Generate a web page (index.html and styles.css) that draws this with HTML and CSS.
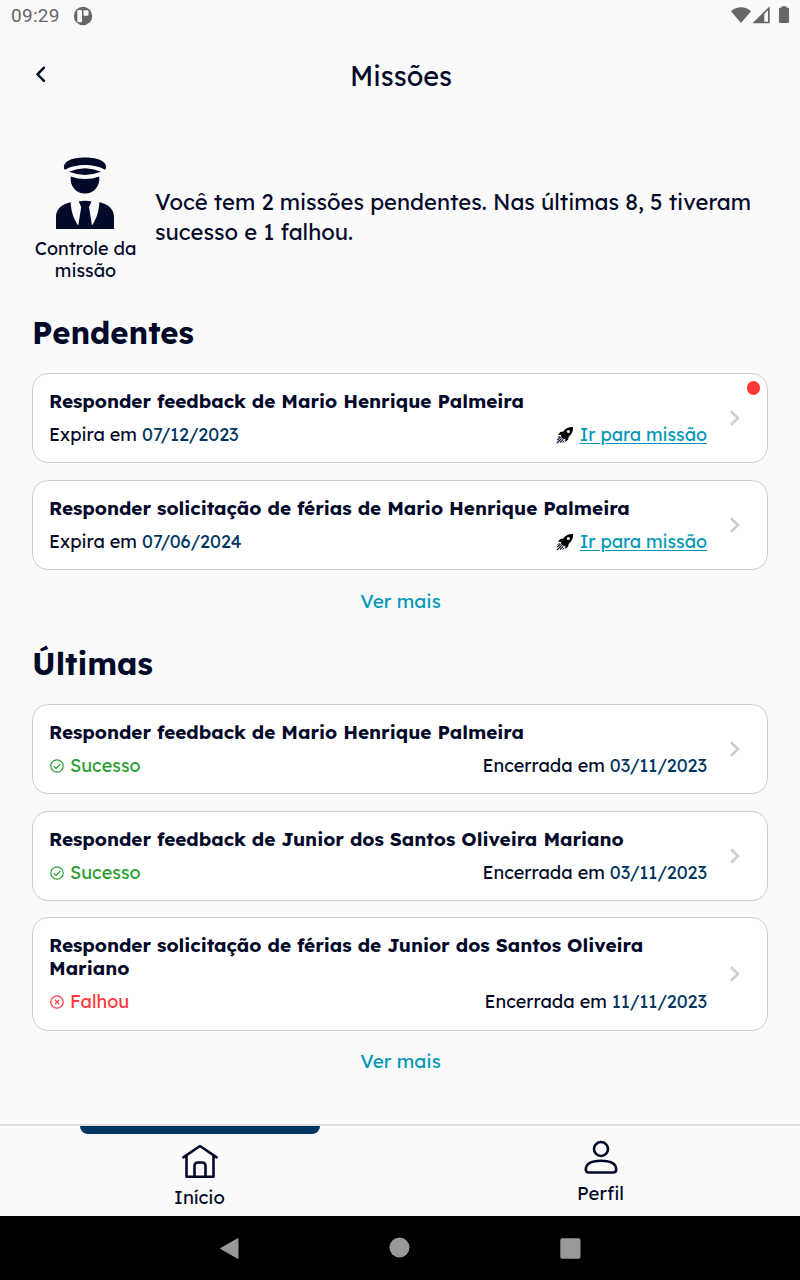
FILE: index.html
```html
<!DOCTYPE html>
<html lang="pt-BR">
<head>
  <meta charset="UTF-8" />
  <meta name="viewport" content="width=device-width, initial-scale=1.0"/>
  <title>Missões</title>
  <link rel="stylesheet" href="styles.css">
</head>
<body>

  <svg width="0" height="0" class="symbols">
    <symbol id="rocket" viewBox="0 0 18 18">
      <path d="M17 1C12.500 .8 9.200 2.600 7.300 5.400L4.300 6 2 8.800 5.200 8.900C4.900 10.200 5.200 11.300 6 12S8 13.100 9.300 12.800L9.300 16 12 13.800 12.800 10.700C15.800 8.400 17.400 5 17 1Z"/>
      <circle cx="12.400" cy="5.600" r="1.500" fill="#fff"/>
      <path d="M4.600 10.900L1.300 14.200M5.600 12.400L1 17M7.200 13.400L4 16.600" fill="none" stroke="currentColor" stroke-width="1.200"/>
      <path d="M3.600 10L1.800 11.800M8.300 14.700L6.600 16.900" fill="none" stroke="currentColor"/>
    </symbol>
    <symbol id="chevron" viewBox="0 0 12 18">
      <path d="M2 2.200L9 9L2 15.800" fill="none" stroke="currentColor" stroke-width="2.600"/>
    </symbol>
    <symbol id="success" viewBox="0 0 14 14">
      <g fill="none" stroke="currentColor" stroke-width="1.200">
        <circle cx="7" cy="7" r="6.200"/>
        <path d="M3.800 7.200L6 9.400L10.400 5"/>
      </g>
    </symbol>
    <symbol id="fail" viewBox="0 0 14 14">
      <g fill="none" stroke="currentColor" stroke-width="1.200">
        <circle cx="7" cy="7" r="6.200"/>
        <path d="M4.900 4.900L9.100 9.100M9.100 4.900L4.900 9.100"/>
      </g>
    </symbol>
  </svg>

  <div class="status-bar">
    <span class="clock">09:29</span>
    <svg class="app-icon" width="20" height="20" viewBox="0 0 20 20">
      <circle cx="10" cy="10" r="9.200" fill="#666"/>
      <rect x="4.300" y="4" width="4.700" height="12.300" rx="1.200" fill="#fafafa"/>
      <rect x="10.500" y="4.300" width="5" height="5.500" rx="1.200" fill="#fafafa"/>
    </svg>
    <svg class="signals" width="60" height="20" viewBox="0 0 60 20" fill="#666">
      <path d="M1 6.200C6.500 .8 15.500 .8 21 6.200L11 18Z"/>
      <path d="M22.500 18.300L39.700 1.200V18.300Z"/>
      <path d="M34.300 9L38 5.300V16.800H34.300Z" fill="#fafafa"/>
      <path d="M51.500 1.200h5v1.600H59V16.700q0 1.300-1.300 1.300H50.300q-1.300 0-1.300-1.300V2.800h2.500Z"/>
    </svg>
  </div>

  <header>
    <svg class="back" width="18" height="20" viewBox="0 0 18 20">
      <path d="M12 3.700L5.500 10.300L12 16.900" fill="none" stroke="currentColor" stroke-width="2.400" stroke-linecap="round"/>
    </svg>
    <h1>Missões</h1>
  </header>

  <main>
    <div class="summary">
      <div class="control">
        <svg width="58" height="73" viewBox="0 0 58 73" fill="currentColor">
          <path d="M8.500 12.500C5.500 5 15 .5 29 .5S52.500 5 49.500 12.500L48.500 12.500C39 6.500 19 6.500 9.500 12.500Z"/>
          <path d="M13 14.800Q29 7.500 45 14.800Q29 21 13 14.800Z"/>
          <path d="M14.800 19.500Q29 24.500 43.200 19.500C44.500 29 38 36.500 29 36.500S13.500 29 14.800 19.500Z"/>
          <path d="M0 72V60C0 52 6 47 14.700 45.300C15 54 17.500 62 22.300 68.500L25.200 50L22.700 44.500Q29 42.800 35.500 44.500L33 50L36 68.500C40.500 62 43 54 43.300 45.300C52 47 58 52 58 60V72Z"/>
        </svg>
        <span>Controle da<br>missão</span>
      </div>
      <p>Você tem 2 missões pendentes. Nas últimas 8, 5 tiveram<br>sucesso e 1 falhou.</p>
    </div>

    <h2>Pendentes</h2>
    <div class="card">
      <div class="card-body">
        <h3>Responder feedback de Mario Henrique Palmeira</h3>
        <div class="meta">
          <span>Expira em <b>07/12/2023</b></span>
          <span class="go"><svg width="18" height="18"><use href="#rocket"/></svg><a href="#">Ir para missão</a></span>
        </div>
      </div>
      <svg class="chevron" width="12" height="18"><use href="#chevron"/></svg>
      <span class="dot"></span>
    </div>
    <div class="card">
      <div class="card-body">
        <h3>Responder solicitação de férias de Mario Henrique Palmeira</h3>
        <div class="meta">
          <span>Expira em <b>07/06/2024</b></span>
          <span class="go"><svg width="18" height="18"><use href="#rocket"/></svg><a href="#">Ir para missão</a></span>
        </div>
      </div>
      <svg class="chevron" width="12" height="18"><use href="#chevron"/></svg>
    </div>
    <a class="more" href="#">Ver mais</a>

    <h2>Últimas</h2>
    <div class="card">
      <div class="card-body">
        <h3>Responder feedback de Mario Henrique Palmeira</h3>
        <div class="meta">
          <span class="status success"><svg width="14" height="14"><use href="#success"/></svg>Sucesso</span>
          <span>Encerrada em <b>03/11/2023</b></span>
        </div>
      </div>
      <svg class="chevron" width="12" height="18"><use href="#chevron"/></svg>
    </div>
    <div class="card">
      <div class="card-body">
        <h3>Responder feedback de Junior dos Santos Oliveira Mariano</h3>
        <div class="meta">
          <span class="status success"><svg width="14" height="14"><use href="#success"/></svg>Sucesso</span>
          <span>Encerrada em <b>03/11/2023</b></span>
        </div>
      </div>
      <svg class="chevron" width="12" height="18"><use href="#chevron"/></svg>
    </div>
    <div class="card tall">
      <div class="card-body">
        <h3>Responder solicitação de férias de Junior dos Santos Oliveira<br>Mariano</h3>
        <div class="meta">
          <span class="status fail"><svg width="14" height="14"><use href="#fail"/></svg>Falhou</span>
          <span>Encerrada em <b>11/11/2023</b></span>
        </div>
      </div>
      <svg class="chevron" width="12" height="18"><use href="#chevron"/></svg>
    </div>
    <a class="more last" href="#">Ver mais</a>
  </main>

  <nav class="tabs">
    <a class="tab active" href="#">
      <svg width="38" height="36" viewBox="0 0 38 36" fill="none" stroke="currentColor" stroke-width="2.600" stroke-linecap="round" stroke-linejoin="round">
        <path d="M2.300 14.300L19 3L35.700 14.300M5.500 12.500V33.700H32.500V12.500"/>
        <path d="M13.500 33.500V23Q13.500 19.500 17 19.500H21Q24.500 19.500 24.500 23V33.500"/>
      </svg>
      <span>Início</span>
    </a>
    <a class="tab profile" href="#">
      <svg width="38" height="36" viewBox="0 0 38 36" fill="none" stroke="currentColor" stroke-width="2.600">
        <circle cx="19" cy="10" r="7"/>
        <path d="M3.800 30.500C3.800 24.500 10 21.700 19 21.700S34.200 24.500 34.200 30.500Q34.200 33.500 31.200 33.500H6.800Q3.800 33.500 3.800 30.500Z"/>
      </svg>
      <span>Perfil</span>
    </a>
  </nav>

  <div class="system-nav">
    <svg width="22" height="24" viewBox="0 0 22 24"><path d="M1.500 12.500L19 2.500V22.500Z" fill="#999" stroke="#999" stroke-linejoin="round"/></svg>
    <svg width="22" height="24" viewBox="0 0 22 24"><circle cx="10.500" cy="11.500" r="10" fill="#999"/></svg>
    <svg width="22" height="24" viewBox="0 0 22 24"><rect x="1.300" y="2.300" width="20.200" height="20.400" rx="2" fill="#999"/></svg>
  </div>

</body>
</html>
```
FILE: styles.css
```css
* {
  box-sizing: border-box;
}
body {
  margin: 0;
  height: 1280px;
  display: flex;
  flex-direction: column;
  background-color: #fafafa;
  color: #030929;
  font-family: Lexend, Inter, sans-serif;
  font-size: 18px;
  line-height: 22px;
  overflow: hidden;
}
a {
  color: #0097b8;
  text-decoration: none;
}
h1, h2, h3, p {
  margin: 0;
}
.symbols {
  position: absolute;
}
.status-bar {
  height: 32px;
  padding: 0 10px 0 11px;
  display: flex;
  align-items: center;
  color: #666;
  font-family: Roboto, sans-serif;
  font-size: 19px;
  letter-spacing: 0.3px;
}
.app-icon {
  margin-left: 13px;
}
.signals {
  margin: 0 0 2px auto;
}
header {
  height: 89px;
  padding: 0 32px;
  display: grid;
  grid-template-columns: 18px 1fr 16px;
  align-items: center;
}
.back {
  margin-bottom: 5px;
}
h1 {
  margin-bottom: 2px;
  font-size: 27px;
  font-weight: 400;
  line-height: 32px;
  text-align: center;
}
main {
  flex: 1;
  padding: 36px 32px 0;
}
.summary {
  display: flex;
  align-items: center;
  height: 125px;
}
.control {
  width: 107px;
  display: flex;
  flex-direction: column;
  align-items: center;
  gap: 8px;
  text-align: center;
}
.control svg {
  margin: -1px 1px 0 0;
}
.summary p {
  margin: 0 0 6px 16px;
  font-size: 22px;
  line-height: 30px;
  white-space: nowrap;
}
h2 {
  margin-top: 31px;
  margin-bottom: 20px;
  font-size: 31px;
  font-weight: 700;
  line-height: 40px;
}
.card {
  position: relative;
  display: flex;
  align-items: center;
  padding: 16px 26px 16px 16px;
  background: #fff;
  border: 1px solid #d3cacd;
  border-radius: 16px;
}
.card + .card {
  margin-top: 17px;
}
.card + .tall {
  margin-top: 16px;
  padding-bottom: 17px;
}
.card-body {
  width: 658px;
}
h3 {
  font-size: 19px;
  font-weight: 700;
  line-height: 23px;
  letter-spacing: -0.045px;
  white-space: nowrap;
}
.meta {
  display: flex;
  justify-content: space-between;
  margin-top: 11px;
}
.meta b {
  color: #003560;
  font-weight: 400;
}
.go, .status {
  display: flex;
  align-items: center;
  gap: 6px;
}
.status svg {
  margin-left: 1px;
}
.go a {
  letter-spacing: -0.07px;
  text-decoration: underline;
  text-underline-offset: 2px;
}
.success {
  color: #2a9d2f;
}
.fail {
  color: #ff3737;
}
.chevron {
  margin-left: auto;
  color: #d3cacd;
}
.dot {
  position: absolute;
  top: 7px;
  right: 7px;
  width: 13px;
  height: 14px;
  border-radius: 7px;
  background: #ff3737;
}
.more {
  display: block;
  margin: 19px 0 0 1px;
  font-size: 19px;
  line-height: 24px;
  text-align: center;
}
.last {
  margin-top: 18px;
}
.tabs {
  display: flex;
  height: 92px;
  border-top: 2px solid #e3dddf;
}
.tab {
  flex: 1;
  display: flex;
  flex-direction: column;
  align-items: center;
  color: #030929;
  font-size: 18.5px;
}
.active::before {
  content: '';
  width: 240px;
  height: 8px;
  margin-bottom: 9px;
  border-radius: 0 0 8px 8px;
  background: #003560;
}
.tab span {
  margin-top: 7px;
}
.profile {
  padding: 13px 0 0 2px;
}
.system-nav {
  height: 64px;
  padding: 0 219px;
  display: flex;
  justify-content: space-between;
  align-items: center;
  background: #000;
}
```
